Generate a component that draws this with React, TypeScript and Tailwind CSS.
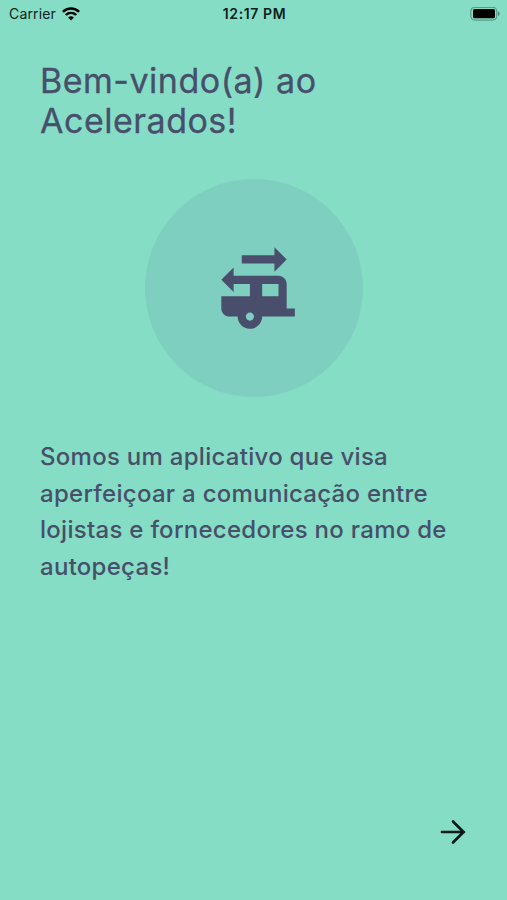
import React from "react";
import { MdRvHookup } from "react-icons/md";

function StatusBar() {
  return (
    <div className="h-7 grid grid-cols-3 items-center pl-[9px] pr-[7px] text-[#10201c]">
      <div className="flex items-center gap-[6px]">
        <span className="text-[14px] leading-7 tracking-[0.15px]">Carrier</span>
        <svg width="18" height="14" viewBox="0 0 18 14" fill="none" stroke="#000">
          <path d="M0.9 4.9a11.5 11.5 0 0 1 16.2 0" strokeWidth="2.5" />
          <path d="M3.8 8a7.4 7.4 0 0 1 10.4 0" strokeWidth="2.4" />
          <path d="M9 13.6L6.1 10.6a4.1 4.1 0 0 1 5.8 0z" fill="#000" stroke="none" />
        </svg>
      </div>
      <span className="text-center text-[14px] font-semibold leading-7 tracking-[0.6px] whitespace-nowrap">
        12:17 PM
      </span>
      <div className="flex justify-end">
        <svg width="30" height="14" viewBox="0 0 30 14" fill="none">
          <rect x="0.8" y="0.3" width="26" height="12.8" rx="3.8" stroke="#4f8c7b" />
          <rect x="3" y="2.1" width="22" height="9.2" rx="1.6" fill="#000" />
          <path d="M28 4.5c2.2.6 2.2 3.8 0 4.4z" fill="#4f8c7b" />
        </svg>
      </div>
    </div>
  );
}

function App() {
  return (
    <div className="h-[900px] w-[507px] overflow-hidden flex flex-col bg-[#85ddc5] font-['Inter',sans-serif]">
      <StatusBar />
      <main className="flex-1 flex flex-col px-10 pt-[33px]">
        <h1 className="text-[34px] leading-[40px] font-normal tracking-[0.5px] text-[#474f6b] [-webkit-text-stroke:0.3px_#474f6b]">
          Bem-vindo(a) ao
          <br />
          Acelerados!
        </h1>
        <div className="mt-[38px] size-[218px] self-center rounded-full bg-[#7ecfbf] flex items-center justify-center">
          <MdRvHookup className="size-[98px] text-[#4a4e6d]" />
        </div>
        <p className="mt-[42px] text-[24px] leading-[36.7px] font-medium tracking-[0.28px] whitespace-nowrap text-[#474f6b]">
          Somos um aplicativo que visa
          <br />
          aperfeiçoar a comunicação entre
          <br />
          lojistas e fornecedores no ramo de
          <br />
          autopeças!
        </p>
      </main>
      <footer className="flex justify-end pr-[39px] pb-[53px]">
        <button type="button" aria-label="Continuar">
          <svg
            width="30"
            height="30"
            viewBox="0 0 30 30"
            fill="none"
            stroke="#0c1b17"
            strokeWidth="2.7"
            strokeLinecap="round"
            strokeLinejoin="round"
          >
            <path d="M4 15h22M15 4.5L25.5 15 15 25.5" />
          </svg>
        </button>
      </footer>
    </div>
  );
}

export default App;
